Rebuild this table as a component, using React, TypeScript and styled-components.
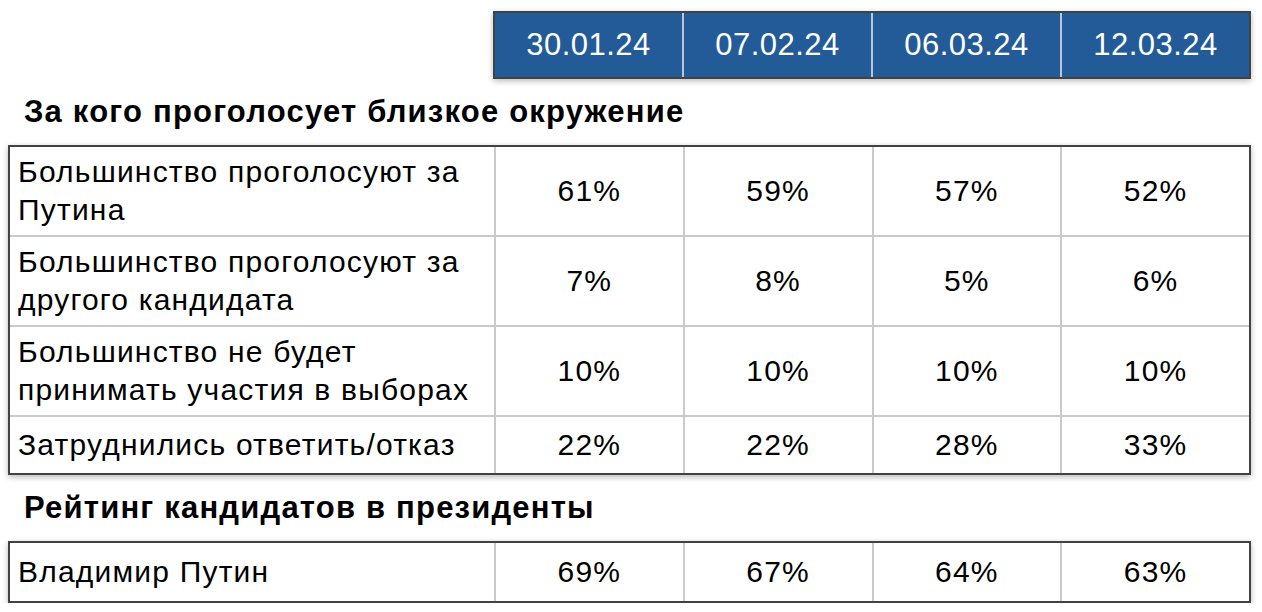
import React from 'react';
import styled, { createGlobalStyle } from 'styled-components';

const GlobalStyle = createGlobalStyle`
  body {
    margin: 0;
    background: #ffffff;
    font-family: 'Liberation Sans', Arial, sans-serif;
    color: #000000;
  }
`;

const dates = ['30.01.24', '07.02.24', '06.03.24', '12.03.24'];

const closeCircle = [
  { label: ['Большинство проголосуют за', 'Путина'], values: ['61%', '59%', '57%', '52%'] },
  { label: ['Большинство проголосуют за', 'другого кандидата'], values: ['7%', '8%', '5%', '6%'] },
  { label: ['Большинство не будет', 'принимать участия в выборах'], values: ['10%', '10%', '10%', '10%'] },
  { label: ['Затруднились ответить/отказ'], values: ['22%', '22%', '28%', '33%'], short: true },
];

const rating = [{ label: ['Владимир Путин'], values: ['69%', '67%', '64%', '63%'] }];

const Page = styled.div`
  width: 1262px;
  padding: 11px 11px 0 8px;
  box-sizing: border-box;
`;

const HeaderRow = styled.div`
  display: flex;
  justify-content: flex-end;
`;

const Grid = styled.div<{ $first: number }>`
  display: grid;
  grid-template-columns: ${p => (p.$first ? `${p.$first}px ` : '')}repeat(4, 1fr);
  gap: 2px;
  background: #cacaca;
  border: 2px solid #424242;
  box-shadow: 0 2px 6px rgba(0, 0, 0, 0.28);
`;

const DateGrid = styled(Grid)`
  width: 758px;
  box-sizing: border-box;
  background: #bcc6d2;
`;

const DateCell = styled.div`
  height: 64px;
  background: #225b98;
  color: #ffffff;
  font-size: 31px;
  letter-spacing: 0.5px;
  display: flex;
  align-items: center;
  justify-content: center;
`;

const SectionTitle = styled.h2`
  margin: 0;
  height: 66px;
  padding-left: 16px;
  display: flex;
  align-items: center;
  font-size: 31px;
  letter-spacing: 1.2px;
  font-weight: 700;
`;

const LabelCell = styled.div<{ $h: number }>`
  height: ${p => p.$h}px;
  background: #ffffff;
  padding-left: 8px;
  display: flex;
  flex-direction: column;
  justify-content: center;
  font-size: 30px;
  letter-spacing: 1.2px;
  line-height: 38px;
  white-space: nowrap;
`;

const ValueCell = styled.div<{ $h: number }>`
  height: ${p => p.$h}px;
  background: #ffffff;
  display: flex;
  align-items: center;
  justify-content: center;
  font-size: 30px;
  letter-spacing: 1.2px;
`;

type Row = { label: string[]; values: string[]; short?: boolean };

const DataTable = ({ rows, h }: { rows: Row[]; h: (r: Row) => number }) => (
  <Grid $first={484}>
    {rows.map((r, i) => (
      <React.Fragment key={i}>
        <LabelCell $h={h(r)}>
          {r.label.map(l => (
            <span key={l}>{l}</span>
          ))}
        </LabelCell>
        {r.values.map((v, j) => (
          <ValueCell key={j} $h={h(r)}>
            {v}
          </ValueCell>
        ))}
      </React.Fragment>
    ))}
  </Grid>
);

export default function App() {
  return (
    <Page>
      <GlobalStyle />
      <HeaderRow>
        <DateGrid $first={0}>
          {dates.map(d => (
            <DateCell key={d}>{d}</DateCell>
          ))}
        </DateGrid>
      </HeaderRow>
      <SectionTitle>За кого проголосует близкое окружение</SectionTitle>
      <DataTable rows={closeCircle} h={r => (r.short ? 56 : 88)} />
      <SectionTitle>Рейтинг кандидатов в президенты</SectionTitle>
      <DataTable rows={rating} h={() => 58} />
    </Page>
  );
}
